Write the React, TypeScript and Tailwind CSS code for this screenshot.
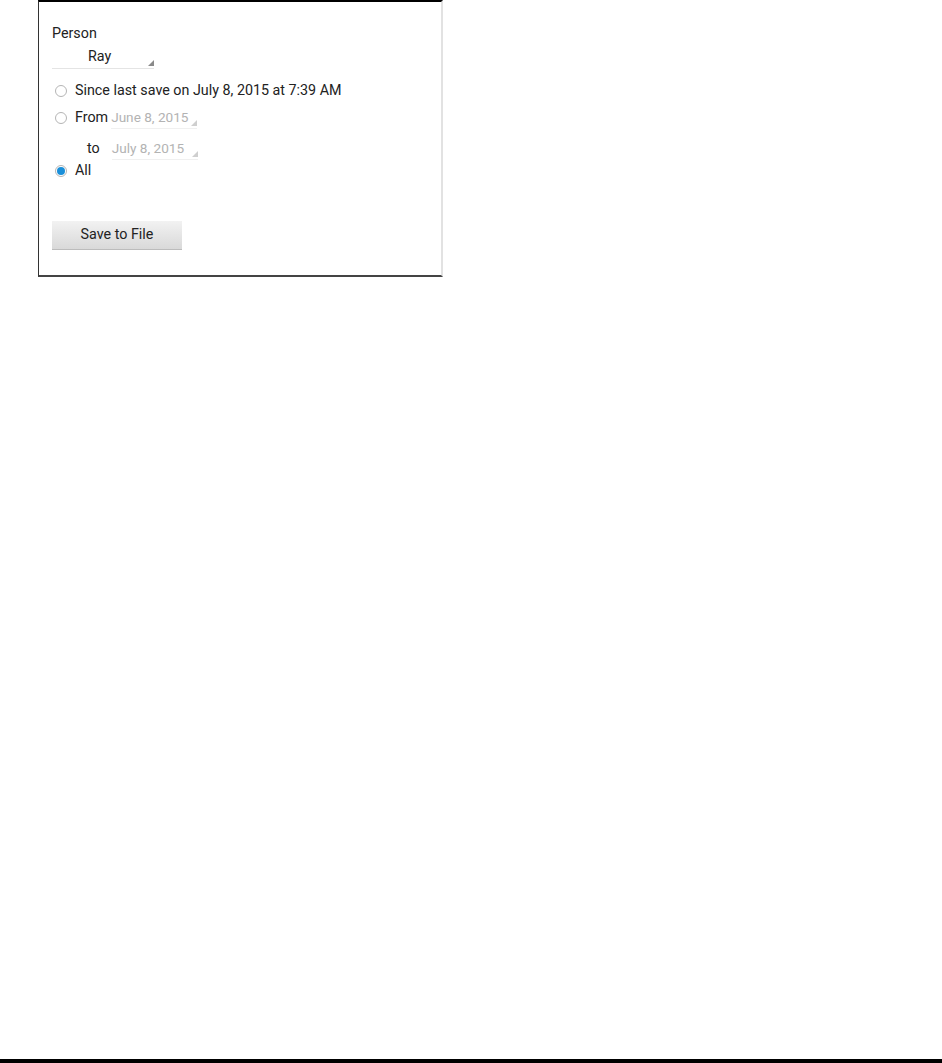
import React, { useState } from 'react';

const Corner = ({ light }: { light?: boolean }) => (
  <svg width="6" height="6" viewBox="0 0 6 6" className="absolute right-0 bottom-[2px]">
    <polygon points="6,0 6,6 0,6" fill={light ? '#cfcfcf' : '#8a8a8a'} />
  </svg>
);

const Radio = ({ checked, onClick }: { checked: boolean; onClick: () => void }) => (
  <button
    onClick={onClick}
    className="w-[12px] h-[12px] rounded-full border border-[#b5b5b5] bg-white flex items-center justify-center shrink-0"
  >
    {checked && <span className="w-[8px] h-[8px] rounded-full bg-[#1a8fd9]" />}
  </button>
);

const DatePick = ({ value }: { value: string }) => (
  <div className="relative w-[86px] h-[22px] flex items-center text-[13.6px] text-[#b3b3b3] border-b border-[#f0f0f0]">
    {value}
    <Corner light />
  </div>
);

export default function App() {
  const [mode, setMode] = useState('all');

  return (
    <div className="min-h-screen flex flex-col justify-between bg-white font-['Roboto',sans-serif] text-[14.3px] text-[#222]">
      <div className="ml-[38px] w-[405px] h-[277px] border-t-2 border-t-black border-l border-l-[#333] border-b-2 border-b-[#444] border-r-2 border-r-[#e2e2e2] pl-[13px] pt-[22px]">
        <div className="leading-[18px]">Person</div>
        <div className="relative mt-[4px] w-[102px] h-[23px] border-b border-[#e4e4e4] flex items-center pl-[36px]">
          Ray
          <Corner />
        </div>

        <div className="mt-[12px] flex items-center gap-[8px] pl-[3px] h-[20px]">
          <Radio checked={mode === 'since'} onClick={() => setMode('since')} />
          <span>Since last save on July 8, 2015 at 7:39 AM</span>
        </div>

        <div className="mt-[6px] flex items-center pl-[3px]">
          <Radio checked={mode === 'range'} onClick={() => setMode('range')} />
          <span className="ml-[8px] mr-[3px]">From</span>
          <DatePick value="June 8, 2015" />
        </div>

        <div className="mt-[9px] flex items-center pl-[35px]">
          <span className="mr-[12px]">to</span>
          <DatePick value="July 8, 2015" />
        </div>

        <div className="mt-[1px] flex items-center gap-[8px] pl-[3px] h-[20px]">
          <Radio checked={mode === 'all'} onClick={() => setMode('all')} />
          <span>All</span>
        </div>

        <button className="mt-[40px] w-[130px] h-[29px] bg-gradient-to-b from-[#f2f2f2] to-[#d9d9d9] border-b border-[#bcbcbc] text-[14.3px] text-[#222]">
          Save to File
        </button>
      </div>

      <div className="h-[4px] bg-black" />
    </div>
  );
}
